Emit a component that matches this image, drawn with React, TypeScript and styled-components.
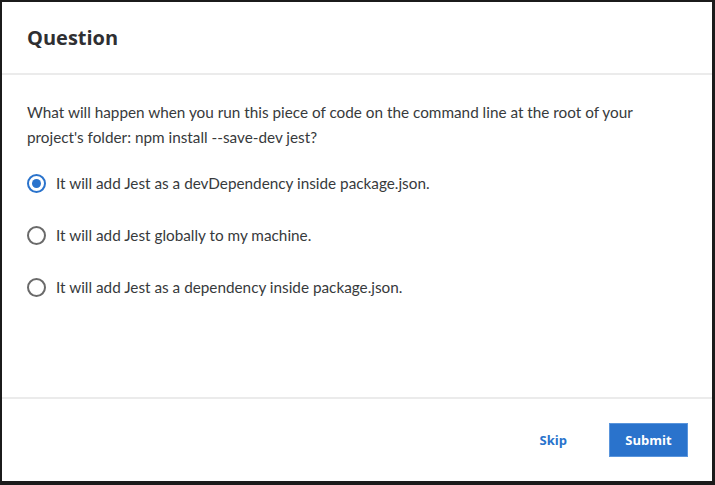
import React, { useState } from "react";
import styled, { createGlobalStyle } from "styled-components";

const GlobalStyle = createGlobalStyle`
  html, body {
    margin: 0;
    padding: 0;
    background: #1b1b1b;
  }
  #root {
    height: 100vh;
  }
`;

const Frame = styled.div`
  box-sizing: border-box;
  height: 100vh;
  padding: 2px 3px 4px 2px;
  display: flex;
`;

const Modal = styled.div`
  flex: 1;
  background: #ffffff;
  display: flex;
  flex-direction: column;
`;

const Header = styled.div`
  height: 73px;
  box-sizing: border-box;
  padding: 0 25px;
  display: flex;
  align-items: center;
  border-bottom: 2px solid #ebebeb;
`;

const Title = styled.h2`
  margin: 0;
  font-family: "Open Sans", sans-serif;
  font-weight: 700;
  font-size: 20px;
  color: #2f2f32;
`;

const Body = styled.div`
  flex: 1;
  padding: 25px 25px 0;
  font-family: "Lato", sans-serif;
  font-size: 15.3px;
  color: #373a3c;
`;

const Prompt = styled.p`
  margin: 0 0 20px;
  line-height: 25px;
  max-width: 630px;
`;

const Options = styled.div`
  display: flex;
  flex-direction: column;
  gap: 26px;
`;

const Option = styled.label`
  display: flex;
  align-items: center;
  gap: 10px;
  height: 26px;
  cursor: pointer;
`;

const Radio = styled.span<{ checked: boolean }>`
  box-sizing: border-box;
  width: 19px;
  height: 19px;
  border-radius: 50%;
  border: 2px solid ${(props) => (props.checked ? "#2a73cc" : "#6a6a6a")};
  display: flex;
  align-items: center;
  justify-content: center;
  &::after {
    content: "";
    width: 9px;
    height: 9px;
    border-radius: 50%;
    background: ${(props) => (props.checked ? "#2a73cc" : "transparent")};
  }
`;

const Footer = styled.div`
  height: 84px;
  box-sizing: border-box;
  border-top: 2px solid #ebebeb;
  display: flex;
  align-items: center;
  justify-content: flex-end;
  padding: 0 24px 0 0;
  gap: 28px;
`;

const TextButton = styled.button`
  background: none;
  border: none;
  padding: 8px 14px;
  font-family: "Open Sans", sans-serif;
  font-weight: 700;
  font-size: 13px;
  color: #2a73cc;
  cursor: pointer;
`;

const PrimaryButton = styled.button`
  width: 79px;
  height: 34px;
  background: #2a73cc;
  border: 1px solid #5a95dc;
  font-family: "Open Sans", sans-serif;
  font-weight: 700;
  font-size: 13px;
  color: #ffffff;
  cursor: pointer;
`;

const answers = [
  "It will add Jest as a devDependency inside package.json.",
  "It will add Jest globally to my machine.",
  "It will add Jest as a dependency inside package.json.",
];

export default function App() {
  const [selected, setSelected] = useState(0);

  return (
    <>
      <GlobalStyle />
      <Frame>
        <Modal>
          <Header>
            <Title>Question</Title>
          </Header>
          <Body>
            <Prompt>
              What will happen when you run this piece of code on the command
              line at the root of your project's folder: npm install --save-dev
              jest?
            </Prompt>
            <Options>
              {answers.map((answer, index) => (
                <Option key={index} onClick={() => setSelected(index)}>
                  <Radio checked={index === selected} />
                  {answer}
                </Option>
              ))}
            </Options>
          </Body>
          <Footer>
            <TextButton>Skip</TextButton>
            <PrimaryButton>Submit</PrimaryButton>
          </Footer>
        </Modal>
      </Frame>
    </>
  );
}
